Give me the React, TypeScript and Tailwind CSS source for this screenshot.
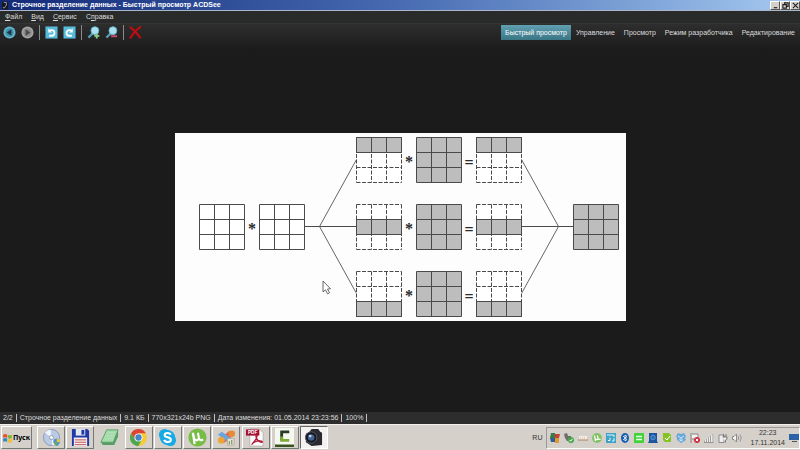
import React from 'react';

type CellStyle = 'solid' | 'dashed';

interface MatrixProps {
  x: number;
  y: number;
  fill?: boolean;
  row?: number;
  style?: CellStyle;
}

const CELL = 15;
const SIZE = CELL * 3;

const Matrix: React.FC<MatrixProps> = ({ x, y, fill = false, row, style = 'solid' }) => {
  const d = [0, 1, 2, 3]
    .map((i) => `M0 ${i * CELL}H${SIZE}M${i * CELL} 0V${SIZE}`)
    .join('');
  return (
    <g transform={`translate(${x} ${y})`} fill="none" stroke="#4a4a4a">
      <rect width={SIZE} height={SIZE} fill={fill ? '#bdbdbd' : '#fff'} stroke="none" />
      <path d={d} strokeDasharray={style === 'dashed' ? '4 1.500' : undefined} />
      {row !== undefined && (
        <g transform={`translate(0 ${row * CELL})`}>
          <rect width={SIZE} height={CELL} fill="#bdbdbd" />
          <path d={`M${CELL} 0V${CELL}M${CELL * 2} 0V${CELL}`} />
        </g>
      )}
    </g>
  );
};

const bands = [
  { y: 4.5, row: 0 },
  { y: 71.5, row: 1 },
  { y: 138.5, row: 2 },
];

const Diagram: React.FC = () => (
  <svg width="451" height="188" viewBox="0 0 451 188" className="bg-[#fdfdfd]" role="img" aria-label="Строчное разделение данных">
    <g fill="none" stroke="#4a4a4a">
      <path d="M129.5 93.5H181.5M346.5 93.5H398.5" />
      <path d="M181.5 26.5L144.5 93.5L181.5 160.5M346.5 26.5L383.5 93.5L346.5 160.5" stroke="#666" />
    </g>
    <Matrix x={24.5} y={71.5} />
    <Matrix x={84.5} y={71.5} />
    {bands.map(({ y, row }) => (
      <g key={row}>
        <Matrix x={181.5} y={y} row={row} style="dashed" />
        <Matrix x={241.5} y={y} fill />
        <Matrix x={301.5} y={y} row={row} style="dashed" />
      </g>
    ))}
    <Matrix x={398.5} y={71.5} fill />
    <g fontSize="16" fontWeight="700" textAnchor="middle" fill="#2a2a2a" className="font-['Liberation_Serif',serif]">
      <text x="77" y="101">*</text>
      {bands.map(({ y, row }) => (
        <g key={row}>
          <text x="234" y={y + 29}>*</text>
          <text x="294" y={y + 30}>=</text>
        </g>
      ))}
    </g>
    {/* mouse pointer resting over the picture */}
    <path d="M148 148V159L150.500 156.800L152.500 160.800L154.500 159.800L152.500 156L155.500 155.800Z" fill="#fff" stroke="#444" strokeWidth=".8" />
  </svg>
);

const menus = [
  { key: 'Ф', before: '', after: 'айл' },
  { key: 'В', before: '', after: 'ид' },
  { key: 'С', before: '', after: 'ервис' },
  { key: 'п', before: 'С', after: 'равка' },
];

const modes = ['Быстрый просмотр', 'Управление', 'Просмотр', 'Режим разработчика', 'Редактирование'];

const status = [
  '2/2',
  'Строчное разделение данных',
  '9.1 КБ',
  '770x321x24b PNG',
  'Дата изменения: 01.05.2014 23:23:56',
  '100%',
];

const ToolButton: React.FC<{ label: string; children: React.ReactNode }> = ({ label, children }) => (
  <button aria-label={label} className="h-[13px] w-[13px]">
    <svg viewBox="0 0 14 14" className="h-[13px] w-[13px]">{children}</svg>
  </button>
);

const Separator = () => <span className="h-[15px] w-px bg-[#8a8a8a]" />;

const Magnifier = () => (
  <>
    <path d="M6 8L1.500 12.500" stroke="#4f9fb8" strokeWidth="2.400" />
    <circle cx="8.500" cy="5" r="4.200" fill="#a9e1f1" stroke="#64b5cd" />
  </>
);

const Toolbar = () => (
  <div className="flex items-center gap-[5px] pt-px pl-[3px]">
    <ToolButton label="Назад">
      <circle cx="7" cy="7" r="6.500" fill="#62b6d0" />
      <circle cx="7" cy="7" r="4.500" fill="#4591a8" />
      <path d="M9 3.500V10.500L4 7Z" fill="#163947" />
    </ToolButton>
    <ToolButton label="Вперёд">
      <circle cx="7" cy="7" r="6.500" fill="#a3a3a3" />
      <circle cx="7" cy="7" r="4.500" fill="#8a8a8a" />
      <path d="M5 3.500V10.500L10 7Z" fill="#484848" />
    </ToolButton>
    <Separator />
    <ToolButton label="Повернуть влево">
      <rect x="0.500" y="0.500" width="13" height="13" fill="#57bcd9" />
      <path d="M5 4.500H7.200A2.900 2.900 0 0 1 7.200 10.500H4.500" fill="none" stroke="#fff" strokeWidth="1.900" />
      <path d="M3.500 2.500V7H7.500Z" fill="#fff" />
    </ToolButton>
    <ToolButton label="Повернуть вправо">
      <rect x="0.500" y="0.500" width="13" height="13" fill="#57bcd9" />
      <path d="M9 4.500H6.800A2.900 2.900 0 0 0 6.800 10.500H9.500" fill="none" stroke="#fff" strokeWidth="1.900" />
      <path d="M10.500 2.500V7H6.500Z" fill="#fff" />
    </ToolButton>
    <Separator />
    <ToolButton label="Увеличить">
      <Magnifier />
      <path d="M10.500 8V13.500M7.800 10.700H13.300" stroke="#8fce8a" strokeWidth="2" />
    </ToolButton>
    <ToolButton label="Уменьшить">
      <Magnifier />
      <path d="M6.500 11H13" stroke="#c8486a" strokeWidth="2.200" />
    </ToolButton>
    <Separator />
    <ToolButton label="Удалить">
      <path d="M1 1C5 4 9 8.500 12.500 13M13 .5C8.500 3.500 4 8.500 1 13.500" fill="none" stroke="#c50b10" strokeWidth="2.200" />
    </ToolButton>
  </div>
);

const WindowsFlag = () => (
  <>
    <path d="M1 4Q4 2 7 4V9Q4 7 1 9Z" fill="#e5532d" />
    <path d="M8 4Q11 6 14 4V9Q11 11 8 9Z" fill="#79b83b" />
    <path d="M1 10Q4 8 7 10V15Q4 13 1 15Z" fill="#2f86d1" />
    <path d="M8 10Q11 12 14 10V15Q11 17 8 15Z" fill="#f5bd2c" />
  </>
);

const apps: { name: string; flat?: boolean; active?: boolean; icon: React.ReactNode }[] = [
  {
    name: 'Установка',
    icon: (
      <>
        <circle cx="10" cy="10" r="8.500" fill="#bccbe5" stroke="#8698b8" />
        <path d="M10 10L3 5A8.500 8.500 0 0 1 9 1.500ZM10 10L17 15A8.500 8.500 0 0 1 11 18.500Z" fill="#eef5ff" />
        <circle cx="10" cy="10" r="2.200" fill="#f7f7f7" stroke="#8d9cb5" />
        <path d="M12 12L15.500 11L19 12V15Q18 18 15.500 19Q13 18 12 15Z" fill="#4d8fd0" />
        <path d="M15.500 11L19 12V15H15.500Z" fill="#e4c34a" />
        <path d="M12 15H15.500V19Q13 18 12 15Z" fill="#70ad4b" />
      </>
    ),
  },
  {
    name: 'Total Commander',
    icon: (
      <>
        <path d="M1 1H17L19 3V19H1Z" fill="#2038a8" />
        <path d="M5 1H15V8H5Z" fill="#e3e7f1" />
        <path d="M11 2H14V7H11Z" fill="#2038a8" />
        <path d="M3 10H17V19H3Z" fill="#f4f0f0" />
        <path d="M4 12.500H16M4 15H16M4 17.500H16" stroke="#c34c50" />
      </>
    ),
  },
  {
    name: 'Блокнот',
    flat: true,
    icon: (
      <>
        <path d="M7 2H19L14 15H1Z" fill="#a6dcab" stroke="#5aa069" />
        <path d="M8 5H16M7 8H15M5.500 11H14" stroke="#b4e2b7" />
        <path d="M14 15L19 2V9L15 18H3L1 15Z" fill="#589c6a" />
      </>
    ),
  },
  {
    name: 'Chrome',
    icon: (
      <>
        <circle cx="10" cy="10" r="9" fill="#f5cb39" />
        <path d="M2.200 5.500A9 9 0 0 1 17.800 5.500H10L6.300 12Z" fill="#db4437" />
        <path d="M2.200 5.500A9 9 0 0 0 9.800 19L13.600 12L6.400 12Z" fill="#4aa651" />
        <circle cx="10" cy="10" r="4.300" fill="#f5f5f5" />
        <circle cx="10" cy="10" r="3.300" fill="#4285c8" />
      </>
    ),
  },
  {
    name: 'Skype',
    icon: (
      <>
        <circle cx="7" cy="7" r="6" fill="#16abe4" />
        <circle cx="13" cy="13" r="6" fill="#16abe4" />
        <circle cx="10" cy="10" r="8" fill="#16abe4" />
        <path d="M13.500 7C12 4.500 7 4.700 7 7.500C7 10.500 13.500 9 13.500 12.300C13.500 15.500 7.500 15.500 6.500 12.500" fill="none" stroke="#fff" strokeWidth="2.200" />
      </>
    ),
  },
  {
    name: 'µTorrent',
    icon: (
      <>
        <circle cx="10" cy="10" r="9.500" fill="#77bd45" />
        <path d="M5 5L7 17M5.500 6L6.500 11Q9 15 11.500 11L10.500 5M11.500 11Q13 14 16 12" fill="none" stroke="#fff" strokeWidth="2.200" />
      </>
    ),
  },
  {
    name: 'Настройки',
    icon: (
      <>
        <path d="M1 14L13 3L18 7L7 16Z" fill="#e5604a" />
        <path d="M1 7L5 4L17 12L13 16Z" fill="#6ba4da" />
        <circle cx="4.500" cy="13" r="3.500" fill="#eda535" />
        <circle cx="15.500" cy="6" r="3.500" fill="#e98a36" />
        <path d="M11 11H18V18H11Z" fill="#e6e2d8" stroke="#a5a28f" strokeWidth=".7" />
        <path d="M13 17V14M15.500 17V12.500" stroke="#86965f" strokeWidth="1.300" />
      </>
    ),
  },
  {
    name: 'PDF',
    icon: (
      <>
        <path d="M4 1H14L18 5V19H4Z" fill="#fbfbfb" stroke="#a9a3a3" strokeWidth=".7" />
        <rect x="0" y="1.500" width="14" height="6.500" fill="#a60e32" />
        <text x="7" y="6.800" fontSize="5" fontWeight="700" textAnchor="middle" fill="#fff">PDF</text>
        <path d="M6 17.500C9 14 12.500 10 11.500 8C10 7 10 11 13 13.500C17 16.500 19 14 15 13.500C12 13 7 15 6 17.500Z" fill="none" stroke="#b41a3a" strokeWidth="1.400" />
      </>
    ),
  },
  {
    name: 'Camtasia',
    icon: (
      <>
        <rect x="0" y="0" width="20" height="17" fill="#f5f7f1" />
        <path d="M15 4H7V13" fill="none" stroke="#2b3a24" strokeWidth="3" />
        <path d="M7 9V13H15" fill="none" stroke="#7dac35" strokeWidth="3" />
        <path d="M0 17.500H20V20H0Z" fill="#35561d" />
      </>
    ),
  },
  {
    name: 'ACDSee',
    active: true,
    icon: (
      <>
        <path d="M2 6L5 5L8 1H15L17 4L19 5V18L8 19L2 15Z" fill="#282a2f" />
        <circle cx="7.500" cy="10" r="6" fill="#14161d" stroke="#555b65" />
        <circle cx="7.500" cy="10" r="3.500" fill="#46618f" />
        <circle cx="6.500" cy="8.500" r="1.500" fill="#b9d2f1" />
      </>
    ),
  },
];

const tray: { name: string; icon: React.ReactNode }[] = [
  {
    name: 'Office',
    icon: (
      <>
        <path d="M1 0H5V5H0Z" fill="#397b4b" />
        <path d="M5 1H10L9 5H5Z" fill="#c74135" />
        <path d="M0 5H5V9H1Z" fill="#315c97" />
        <path d="M5 5H9V10H5Z" fill="#de9a30" />
      </>
    ),
  },
  {
    name: 'Безопасное извлечение',
    icon: (
      <>
        <path d="M0 1L3 0L4 3H7V8H3L1 5Z" fill="#6b6e6b" />
        <circle cx="7" cy="7" r="3" fill="#43a747" />
        <path d="M5.500 7L6.700 8.200L8.500 5.800" fill="none" stroke="#fff" />
      </>
    ),
  },
  {
    name: 'Клавиатура',
    icon: (
      <>
        <path d="M1 3H9V7H1Z" fill="#f4eee2" />
        <path d="M0 7H10" stroke="#a8825c" />
        <path d="M2 5H8" stroke="#c9b79f" strokeDasharray="1 1" />
      </>
    ),
  },
  {
    name: 'µTorrent',
    icon: (
      <>
        <circle cx="5" cy="5" r="4.900" fill="#83c265" />
        <path d="M2.500 2.500L3.500 8M3.300 5.500Q5 8 6 5.500L5.500 2.500M6 5.500Q7 7 8.500 6" fill="none" stroke="#fff" strokeWidth="1.200" />
      </>
    ),
  },
  {
    name: 'Звук',
    icon: (
      <>
        <rect width="10" height="10" fill="#3fa3c7" />
        <path d="M1 2H8V4M2 7.500H4V4.500M6 8H8V5" fill="none" stroke="#e4f7fc" />
      </>
    ),
  },
  {
    name: 'Bluetooth',
    icon: (
      <>
        <ellipse cx="5" cy="5" rx="4" ry="5" fill="#175fb0" />
        <path d="M3 3L7 6.500L5 8V2L7 3.500L3 7" fill="none" stroke="#fff" strokeWidth=".8" />
      </>
    ),
  },
  {
    name: 'Монитор',
    icon: (
      <>
        <rect width="10" height="10" rx="1" fill="#3ed437" />
        <path d="M2 3.500H8M2 6.500H8" stroke="#e7ffe6" strokeWidth="1.300" />
      </>
    ),
  },
  {
    name: 'Сеть Intel',
    icon: (
      <>
        <path d="M1 0H9V8L10 10H0L1 8Z" fill="#1c559d" />
        <circle cx="5" cy="4.500" r="2.300" fill="#2b6cb4" stroke="#67a9e0" strokeWidth=".7" />
      </>
    ),
  },
  {
    name: 'NVIDIA',
    icon: (
      <>
        <path d="M1 0H7L9 2V9H3L1 7Z" fill="#84c226" />
        <path d="M3 5L5 7L8 3" fill="none" stroke="#fff" />
      </>
    ),
  },
  {
    name: 'Dropbox',
    icon: (
      <>
        <path d="M2 0L5 1L8 0L10 3L9 5L10 7L5 10L1 7L1 5L0 3Z" fill="#69a9da" />
        <path d="M2 3L5 5L8 3M5 5V8M3 6.500L5 8L7 6.500" fill="none" stroke="#e8f4fd" strokeWidth=".8" />
      </>
    ),
  },
  {
    name: 'Центр поддержки',
    icon: (
      <>
        <path d="M1 0V10M2 1H8V6H2" fill="#f2f2f2" stroke="#858585" />
        <circle cx="7" cy="7" r="3" fill="#d22b3d" />
        <path d="M5.800 5.800L8.200 8.200M8.200 5.800L5.800 8.200" stroke="#fff" />
      </>
    ),
  },
  {
    name: 'Сигнал',
    icon: (
      <>
        <path d="M0 9.500V7.500L10 1V9.500Z" fill="#eee" />
        <path d="M0.500 9.500V7.500M2.500 9.500V6M4.500 9.500V4.500M6.500 9.500V3M9 9.500V1M0 9.500H9.500" fill="none" stroke="#888" strokeWidth=".8" />
      </>
    ),
  },
  {
    name: 'Питание',
    icon: (
      <>
        <path d="M1 2H6V9.500H1Z" fill="#eee" stroke="#777" strokeWidth=".8" />
        <path d="M5.500 1V4M8 1V4M4.500 4H9V6L7.500 7V9.500" fill="#eee" stroke="#666" strokeWidth=".8" />
      </>
    ),
  },
  {
    name: 'Громкость',
    icon: (
      <>
        <path d="M0.500 3.500H2L4.500 1V9L2 6.500H0.500Z" fill="#f4f4f4" stroke="#777" strokeWidth=".8" />
        <path d="M6 3Q7.500 5 6 7M8 1.500Q10.500 5 8 8.500" fill="none" stroke="#888" strokeWidth=".8" />
      </>
    ),
  },
];

const windowButtons = [
  { label: 'Свернуть', d: 'M2 6.500H6' },
  { label: 'Восстановить', d: 'M3 3V1H7V5H5M1 3H5V7H1Z' },
  { label: 'Закрыть', d: 'M1 1L7 7M7 1L1 7' },
];

export default function App() {
  return (
    <div className="flex min-h-screen flex-col bg-[#1b1b1b] font-['Liberation_Sans',sans-serif] text-[7px] leading-[10px] text-[#dcdcdc]">
      <header className="flex h-[11px] items-center justify-between border-b border-[#a9b6cb] bg-linear-to-r from-[#142a78] via-[#486bb2] to-[#a6caf0] pl-[2px]">
        <h1 className="flex items-center gap-[3px] font-bold text-white">
          <svg viewBox="0 0 8 9" className="h-[9px] w-[7px]">
            <rect width="7" height="9" fill="#17191f" />
            <path d="M2 1H5V4L3 7H1" fill="none" stroke="#a6adbd" />
          </svg>
          Строчное разделение данных - Быстрый просмотр ACDSee
        </h1>
        <div className="flex">
          {windowButtons.map((b) => (
            <button key={b.label} aria-label={b.label} className="flex h-[9px] w-[10px] items-center justify-center border border-r-[#555] border-b-[#555] border-t-white border-l-white bg-[#d4d0c8]">
              <svg viewBox="0 0 8 8" className="h-[7px] w-[7px]">
                <path d={b.d} fill="none" stroke="#222" strokeWidth="1.300" />
              </svg>
            </button>
          ))}
        </div>
      </header>

      <nav className="flex h-3 items-center gap-[9px] bg-[#292b2a] pl-[5px]">
        {menus.map((m) => (
          <button key={m.key}>
            {m.before}<span className="underline">{m.key}</span>{m.after}
          </button>
        ))}
      </nav>

      <div className="flex h-[27px] items-start justify-between border-t border-[#353535] bg-linear-to-b from-[#2e2e2e] to-[#1b1b1b]">
        <Toolbar />
        <div className="flex gap-px pt-px pr-px">
          {modes.map((mode, i) => (
            <button
              key={mode}
              className={`h-[15px] px-1 ${i === 0 ? 'bg-linear-to-b from-[#60a0b1] to-[#397585] text-white' : ''}`}
            >
              {mode}
            </button>
          ))}
        </div>
      </div>

      <main className="flex flex-1 items-center justify-center pb-[9px]">
        <Diagram />
      </main>

      <footer className="flex h-3 items-center bg-[#2d2d2d] pl-[3px]">
        {status.map((item) => (
          <span key={item} className="mr-[3px] border-r border-[#c0c0c0] pr-[3px] leading-[8px]">{item}</span>
        ))}
      </footer>

      <div className="flex h-[26px] items-center border-t border-[#f2f0ec] bg-[#d5d0ca] text-[#333]">
        <button className="ml-px flex h-[23px] w-[31px] items-center border border-t-white border-l-white border-r-[#777] border-b-[#777] font-['Noto_Sans',sans-serif] text-[7px] font-bold text-black">
          <svg viewBox="0 0 15 18" className="h-3 w-[11px] shrink-0"><WindowsFlag /></svg>
          Пуск
        </button>
        <div className="ml-[5px] flex w-[291px] justify-between">
          {apps.map((app) => (
            <button
              key={app.name}
              aria-label={app.name}
              className={`flex h-[23px] w-7 items-center justify-center border ${
                app.active
                  ? 'border-t-[#666] border-l-[#666] border-r-white border-b-white bg-[#f3f2f0]'
                  : app.flat
                    ? 'border-transparent'
                    : 'border-t-white border-l-white border-r-[#777] border-b-[#777]'
              }`}
            >
              <svg viewBox="0 0 20 20" className="h-[19px] w-[19px]">{app.icon}</svg>
            </button>
          ))}
        </div>
        <span className="mr-1 ml-auto text-[7px]">RU</span>
        <div className="flex h-[22px] items-center border border-t-[#999] border-l-[#999] border-r-white border-b-white pl-[3px]">
          <div className="flex gap-1">
            {tray.map((item) => (
              <svg key={item.name} viewBox="0 0 10 10" className="h-[10px] w-[10px]" role="img" aria-label={item.name}>
                {item.icon}
              </svg>
            ))}
          </div>
          <div className="ml-2 text-center">
            <div>22:23</div>
            <div>17.11.2014</div>
          </div>
          <svg viewBox="0 0 10 10" className="ml-1 h-[10px] w-[10px]">
            <rect y="1" width="10" height="6" fill="#2d62a8" />
            <path d="M3 8.500H8" stroke="#44536b" />
          </svg>
        </div>
      </div>
    </div>
  );
}
